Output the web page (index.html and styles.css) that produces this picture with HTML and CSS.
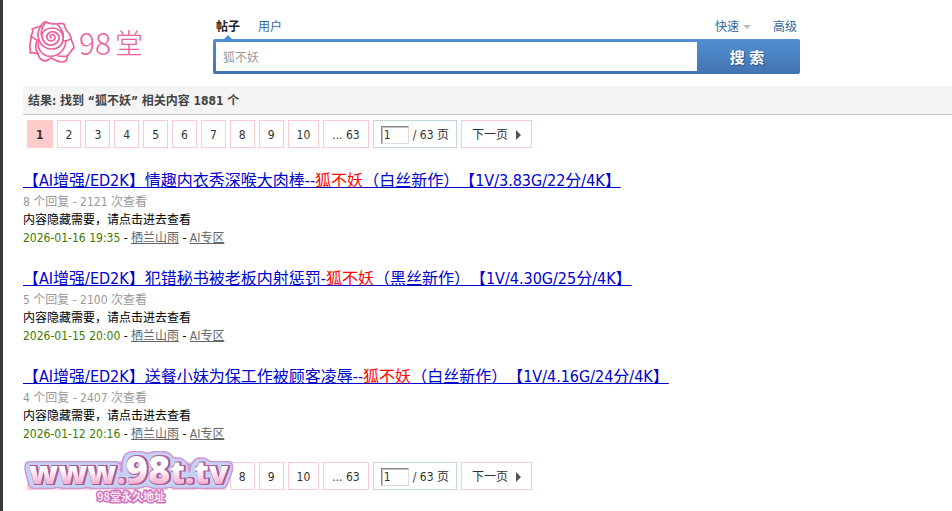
FILE: index.html
```
<!DOCTYPE html>
<html lang="zh-CN">
<head>
  <meta charset="UTF-8">
  <meta name="viewport" content="width=device-width, initial-scale=1.0">
  <title>搜索 - 98堂</title>
  <link rel="stylesheet" href="styles.css">
</head>
<body>
  <div class="header">
    <a class="logo" href="#">
      <svg class="rose" viewBox="0 0 46 42" width="46" height="42">
        <path d="M12 5 C9 6 6 7 3 8 C5 10 3 13 2 15 C4 17 6 18 8 19"/>
        <path d="M2 15 C3 19 0 22 1 27 C2 29 1 31 1 32 C4 31 6 32 9 33"/>
        <path d="M12 5 C13 2 15 1 17 1 C20 3 24 3 28 3 C31 2 33 2 35 3 C36 5 36 8 38 10 C40 12 42 14 42 18 C40 19 38 20 35 20"/>
        <path d="M12 5 C9 9 8 14 10 19 C12 25 17 28 23 28 C30 28 35 23 34 16 C34 11 29 7 23 7 C17 7 12 11 13 16 C14 21 18 25 23 24 C28 23 31 19 30 15 C28 11 23 9 20 12 C16 15 18 20 22 20 C26 20 27 16 25 14 C22 13 20 15 22 17"/>
        <path d="M10 19 C7 26 12 33 18 35 C27 37 36 31 37 20"/>
        <path d="M42 18 C43 21 45 24 45 27 C42 29 41 33 38 35 C35 36 32 35 29 35"/>
        <path d="M9 33 C10 37 13 40 17 40 C19 39 20 38 22 37 C25 38 28 41 33 41 C37 41 39 38 38 35"/>
        <path d="M9 33 C7 30 6 25 8 19 M17 1 C13 6 11 11 13 16 M28 3 C32 7 35 11 34 16"/>
      </svg>
      <span class="logo-num">98</span><span class="logo-name">堂</span>
    </a>
    <form class="search" action="#">
      <div class="search-nav">
        <div>
          <a class="active" href="#">帖子</a>
          <a href="#">用户</a>
        </div>
        <div>
          <a class="quick" href="#">快速</a>
          <a href="#">高级</a>
        </div>
      </div>
      <div class="search-bar">
        <input type="text" value="狐不妖" aria-label="搜索内容">
        <button type="submit">搜 索</button>
      </div>
    </form>
  </div>

  <div class="main">
    <h2 class="result">结果: 找到 “<em>狐不妖</em>” 相关内容 1881 个</h2>

    <div class="pages">
      <strong>1</strong>
      <a href="#">2</a>
      <a href="#">3</a>
      <a href="#">4</a>
      <a href="#">5</a>
      <a href="#">6</a>
      <a href="#">7</a>
      <a href="#">8</a>
      <a href="#">9</a>
      <a href="#">10</a>
      <a href="#">... 63</a>
      <label><input type="text" value="1" aria-label="页码"><span>/ 63 页</span></label>
      <a class="next" href="#">下一页</a>
    </div>

    <ul class="list">
      <li>
        <h3><a href="#">【AI增强/ED2K】情趣内衣秀深喉大肉棒--<em>狐不妖</em>（白丝新作）【1V/3.83G/22分/4K】</a></h3>
        <p class="count">8 个回复 - 2121 次查看</p>
        <p>内容隐藏需要，请点击进去查看</p>
        <p><span class="date">2026-01-16 19:35</span> - <a href="#">栖兰山雨</a> - <a href="#">AI专区</a></p>
      </li>
      <li>
        <h3><a href="#">【AI增强/ED2K】犯错秘书被老板内射惩罚-<em>狐不妖</em>（黑丝新作）【1V/4.30G/25分/4K】</a></h3>
        <p class="count">5 个回复 - 2100 次查看</p>
        <p>内容隐藏需要，请点击进去查看</p>
        <p><span class="date">2026-01-15 20:00</span> - <a href="#">栖兰山雨</a> - <a href="#">AI专区</a></p>
      </li>
      <li>
        <h3><a href="#">【AI增强/ED2K】送餐小妹为保工作被顾客凌辱--<em>狐不妖</em>（白丝新作）【1V/4.16G/24分/4K】</a></h3>
        <p class="count">4 个回复 - 2407 次查看</p>
        <p>内容隐藏需要，请点击进去查看</p>
        <p><span class="date">2026-01-12 20:16</span> - <a href="#">栖兰山雨</a> - <a href="#">AI专区</a></p>
      </li>
    </ul>

    <div class="pages">
      <strong>1</strong>
      <a href="#">2</a>
      <a href="#">3</a>
      <a href="#">4</a>
      <a href="#">5</a>
      <a href="#">6</a>
      <a href="#">7</a>
      <a href="#">8</a>
      <a href="#">9</a>
      <a href="#">10</a>
      <a href="#">... 63</a>
      <label><input type="text" value="1" aria-label="页码"><span>/ 63 页</span></label>
      <a class="next" href="#">下一页</a>

      <!-- 永久地址水印 -->
      <svg class="mark" viewBox="0 0 220 60" width="220" height="60">
        <defs>
          <linearGradient id="pink" gradientUnits="userSpaceOnUse" x1="0" y1="10" x2="0" y2="38">
            <stop offset="0.4" stop-color="#fff"/>
            <stop offset="1" stop-color="#f4a3c8"/>
          </linearGradient>
          <!-- 由外到内: 紫边 蓝底 深色描边 文字 -->
          <filter id="sticker" filterUnits="userSpaceOnUse" x="0" y="0" width="220" height="60" color-interpolation-filters="sRGB">
            <feMorphology in="SourceAlpha" operator="dilate" radius="4" result="fat"/>
            <feGaussianBlur in="fat" stdDeviation="2" result="soft"/>
            <feComponentTransfer in="soft" result="outer">
              <feFuncA type="linear" slope="8" intercept="-2"/>
            </feComponentTransfer>
            <feComponentTransfer in="soft" result="inner">
              <feFuncA type="linear" slope="8" intercept="-4"/>
            </feComponentTransfer>
            <feFlood flood-color="#cf96d8"/>
            <feComposite in2="outer" operator="in" result="edge"/>
            <feFlood flood-color="#c5d2f4"/>
            <feComposite in2="inner" operator="in" result="halo"/>
            <feMorphology in="SourceAlpha" operator="dilate" radius="1"/>
            <feOffset dx="1" dy="0" result="thick"/>
            <feFlood flood-color="#b05a96"/>
            <feComposite in2="thick" operator="in" result="line"/>
            <feMerge>
              <feMergeNode in="edge"/>
              <feMergeNode in="halo"/>
              <feMergeNode in="line"/>
              <feMergeNode in="SourceGraphic"/>
            </feMerge>
          </filter>
        </defs>
        <text class="mark-url" x="8" y="36" filter="url(#sticker)">www.<tspan class="big">98</tspan>t.tv</text>
        <text class="mark-note" x="76" y="53">98堂永久地址</text>
      </svg>
    </div>
  </div>
</body>
</html>
```
FILE: styles.css
```
*{
  margin: 0;
  padding: 0;
  box-sizing: border-box;
}
body{
  min-height: 100vh;
  padding-left: 20px;
  border-left: 3px solid #3a3a3a;
  background-color: #fff;
  color: #000;
  font: 12px/18px "DejaVu Sans Condensed","Noto Sans CJK SC",sans-serif;
}
input,button{
  font-family: inherit;
}
li{
  list-style: none;
}
em{
  font-style: normal;
}
a{
  color: #369;
  text-decoration: none;
}

/* 头部 */
.header{
  display: flex;
  align-items: flex-start;
  padding-top: 18px;
  height: 86px;
}
.logo{
  display: flex;
  align-items: center;
  width: 190px;
  padding: 3px 0 0 6px;
  color: #ea619e;
  font-family: "Noto Sans CJK SC",sans-serif;
  font-weight: 300;
  line-height: 42px;
}
.rose{
  margin-right: 4px;
  fill: none;
  stroke: #ea619e;
  stroke-width: 1.7;
  stroke-linecap: round;
  stroke-linejoin: round;
}
.logo-num{
  margin-right: 4px;
  font-size: 30px;
}
.logo-name{
  font-size: 28px;
}
.search{
  flex: 0 1 587px;
}
.search-nav{
  display: flex;
  justify-content: space-between;
  padding: 0 3px 3px;
}
.search-nav div{
  display: flex;
  gap: 18px;
}
.search-nav .active{
  position: relative;
  color: #222;
  font-weight: bold;
}
.search-nav .active::after{
  content: "";
  position: absolute;
  left: 8px;
  bottom: -3px;
  border: 4px solid transparent;
  border-top: 0;
  border-bottom-color: #4f8ccb;
}
.quick{
  display: flex;
  align-items: center;
  margin-right: 4px;
}
.quick::after{
  content: "";
  margin-left: 4px;
  border: 4px solid transparent;
  border-bottom: 0;
  border-top-color: #bbb;
}
.search-bar{
  display: flex;
  padding: 3px;
  border-radius: 2px;
  background: linear-gradient(#5090d0,#4373b3);
}
.search-bar input{
  flex: 1;
  min-width: 0;
  height: 29px;
  padding: 0 7px;
  border: 0;
  background-color: #fff;
  color: #999;
  font-size: 12px;
}
.search-bar button{
  width: 100px;
  border: 0;
  background: none;
  color: #fff;
  font-size: 15px;
  font-weight: bold;
  text-shadow: 1px 1px 1px #2a5285;
}

/* 结果标题 */
.result{
  padding: 6px 5px 4px;
  border-bottom: 1px solid #c2c2c2;
  background-color: #f4f4f4;
  color: #444;
  font-size: 12px;
  line-height: 18px;
}

/* 分页 */
.pages{
  position: relative;
  display: flex;
  gap: 4px;
  padding: 0 4px;
}
.result + .pages{
  margin-top: 5px;
}
.pages a,.pages strong,.pages label{
  height: 28px;
  padding: 1px 8px 0;
  border: 1px solid #f8cccf;
  color: #333;
  line-height: 26px;
}
.pages strong{
  border-color: #fcc;
  background-color: #fcc;
}
.pages label{
  display: flex;
  align-items: center;
  gap: 4px;
  padding: 1px 7px 0;
  border-color: #c2d5e3;
}
.pages input{
  width: 28px;
  height: 18px;
  border: 1px solid;
  border-color: #848484 #ddd #ddd #848484;
  box-shadow: inset 1px 1px #c4c4c4;
  padding-left: 2px;
  color: #333;
  font-size: 12px;
}
.pages .next{
  display: flex;
  align-items: center;
  gap: 8px;
  padding: 1px 10px 0;
}
.next::after{
  content: "";
  border: 5px solid transparent;
  border-right: 0;
  border-left-color: #555;
}

/* 列表 */
.list{
  padding: 21px 0 19px;
}
.list li + li{
  margin-top: 20px;
}
.list h3{
  font-size: 16px;
  font-weight: normal;
  line-height: 24px;
  text-spacing-trim: space-all;
}
.list h3 a{
  color: #00c;
  text-decoration: underline;
}
.list em{
  color: #f00;
}
.list p a{
  color: #666;
  text-decoration: underline;
}
.list .count{
  color: #999;
}
.date{
  color: #3c7a00;
}

/* 水印 */
.mark{
  position: absolute;
  left: -2px;
  top: -14px;
}
.mark-url{
  fill: url(#pink);
  font-family: "Open Sans",sans-serif;
  font-size: 32px;
  font-weight: 800;
}
.big{
  font-size: 38px;
}
.mark-note{
  fill: #fde6f3;
  stroke: #cf74bd;
  stroke-width: 3px;
  stroke-linejoin: round;
  paint-order: stroke;
  font-family: "Noto Sans CJK SC",sans-serif;
  font-size: 11px;
  font-weight: bold;
}
```
